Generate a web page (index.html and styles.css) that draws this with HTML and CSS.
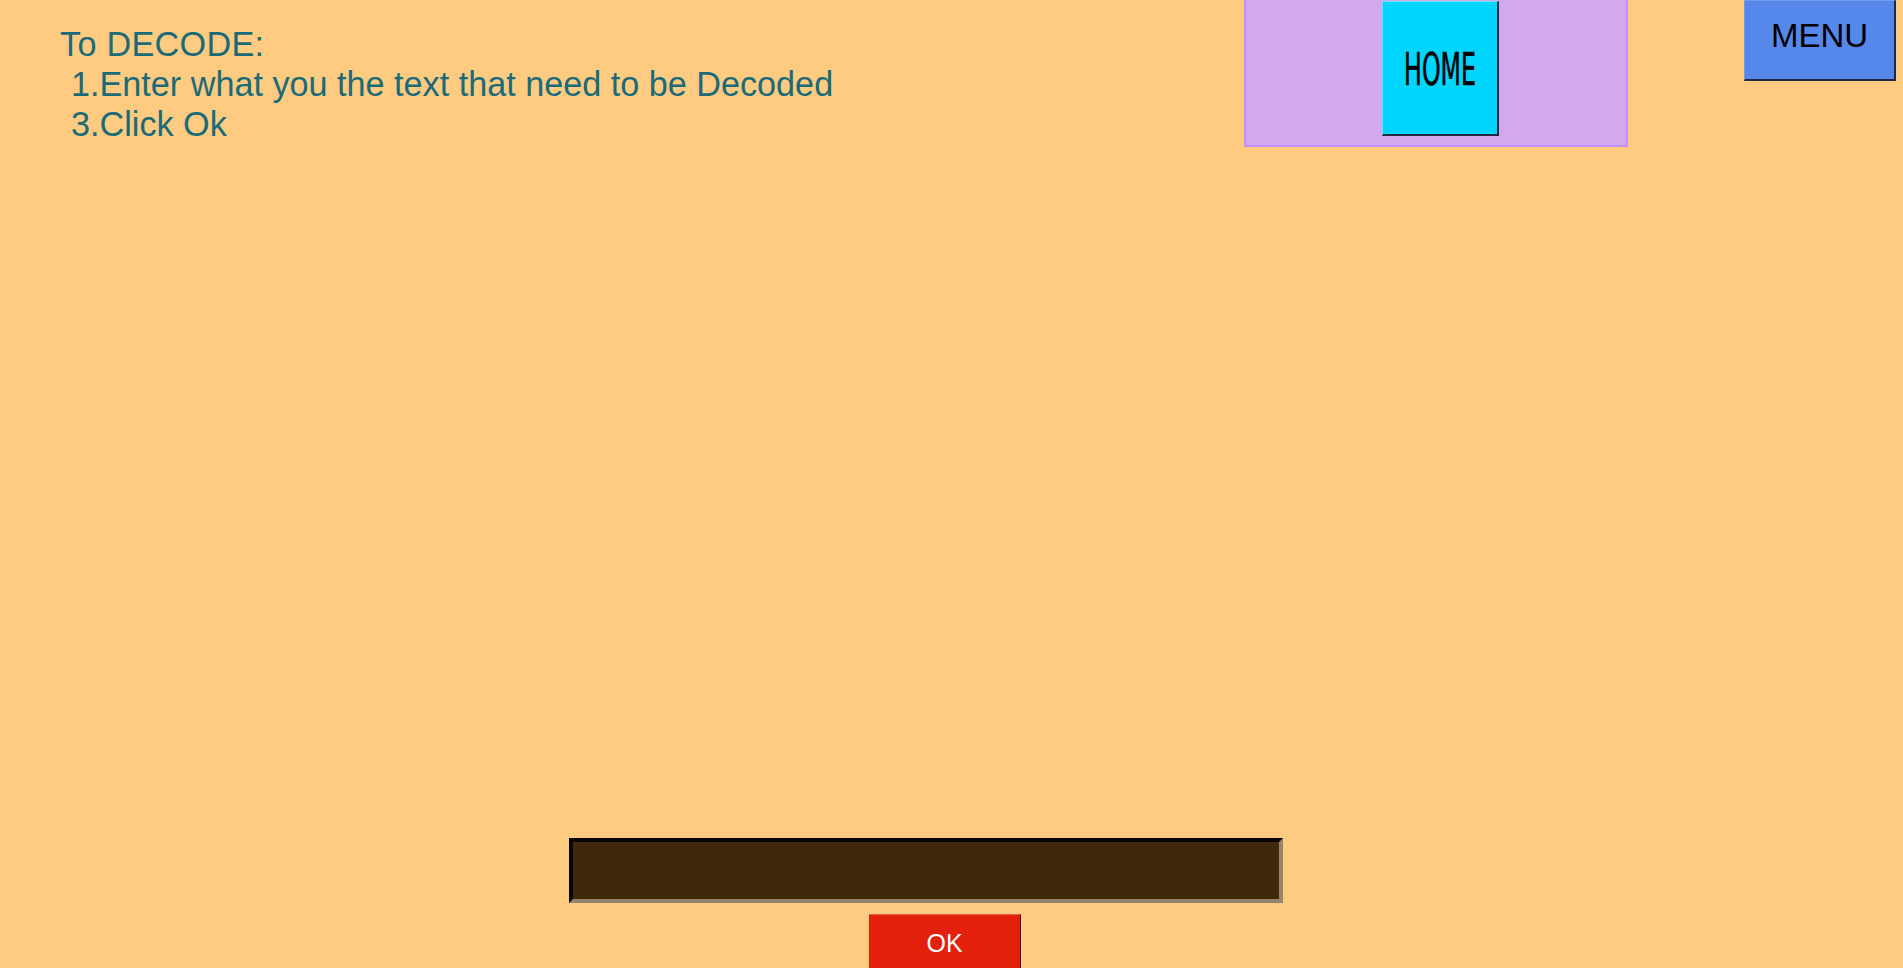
FILE: index.html
```html
<!DOCTYPE html>
<html>
<head>
<meta charset="utf-8">
<title>Decode</title>
<link rel="stylesheet" href="styles.css">
</head>
<body>
<div class="page">
  <header class="top">
    <div class="instructions">
      <div class="title">To DECODE:</div>
      <div class="step">1.Enter what you the text that need to be Decoded</div>
      <div class="step">3.Click Ok</div>
    </div>
    <div class="panel">
      <button class="home"><span class="home-label">HOME</span></button>
    </div>
    <button class="menu">MENU</button>
  </header>
  <main class="form">
    <input class="code-input" type="text">
    <button class="ok">OK</button>
  </main>
</div>
</body>
</html>
```
FILE: styles.css
```css
html, body {
  margin: 0;
  padding: 0;
  background: #ffcb80;
}
.page {
  width: 1903px;
  height: 968px;
  overflow: hidden;
  background: #ffcb80;
  font-family: "Liberation Sans", Arial, sans-serif;
}
.top {
  display: flex;
  align-items: flex-start;
  height: 147px;
}
.instructions {
  flex: none;
  width: 1184px;
  margin-left: 60px;
  padding-top: 24px;
  font-size: 34.2px;
  line-height: 40px;
  color: #1b6a78;
  white-space: nowrap;
}
.title {
  letter-spacing: 0.3px;
}
.step {
  padding-left: 11px;
}
.panel {
  flex: none;
  box-sizing: border-box;
  width: 384px;
  height: 147px;
  background: #d2a8ef;
  border: 2px solid #c48eff;
  border-top: none;
  padding-left: 136px;
  padding-top: 1px;
}
.home {
  box-sizing: border-box;
  width: 117px;
  height: 135px;
  margin: 0;
  padding: 0;
  background: #00d5ff;
  border-style: solid;
  border-width: 1px 2px 2px 1px;
  border-color: #5fe6ff #1c2c3c #1c2c3c #5fe6ff;
  display: flex;
  align-items: center;
  justify-content: center;
  cursor: pointer;
}
.home-label {
  display: inline-block;
  font-family: "Liberation Sans Narrow", "DejaVu Sans Condensed", sans-serif;
  font-size: 44px;
  line-height: 44px;
  color: #000;
  transform: scaleX(0.6);
  -webkit-text-stroke: 0.6px #000;
  margin-top: 3px;
}
.menu {
  flex: none;
  box-sizing: border-box;
  margin: 0 0 0 116px;
  width: 152px;
  height: 81px;
  padding: 0 0 8px 0;
  background: #5588ea;
  border-style: solid;
  border-width: 1px 2px 2px 1px;
  border-color: #6f9cf0 #1c2a44 #1c2a44 #6f9cf0;
  font-family: "Liberation Sans", Arial, sans-serif;
  font-size: 33px;
  color: #000;
  cursor: pointer;
}
.form {
  display: flex;
  flex-direction: column;
  align-items: flex-start;
  margin-top: 691px;
}
.code-input {
  box-sizing: border-box;
  margin: 0 0 0 569px;
  width: 714px;
  height: 65px;
  background: #40280a;
  border-style: solid;
  border-width: 4px;
  border-color: #0a0500 #958570 #958570 #0a0500;
  outline: none;
  padding: 0 8px;
  color: #fff;
  font-size: 24px;
}
.ok {
  box-sizing: border-box;
  margin: 11px 0 0 869px;
  width: 152px;
  height: 58px;
  padding: 0;
  background: #e3200c;
  border: none;
  border-right: 1px solid #3a0a04;
  border-top: 1px solid #ee5a48;
  color: #fff;
  font-family: "Liberation Sans", Arial, sans-serif;
  font-size: 25px;
  cursor: pointer;
}
```
